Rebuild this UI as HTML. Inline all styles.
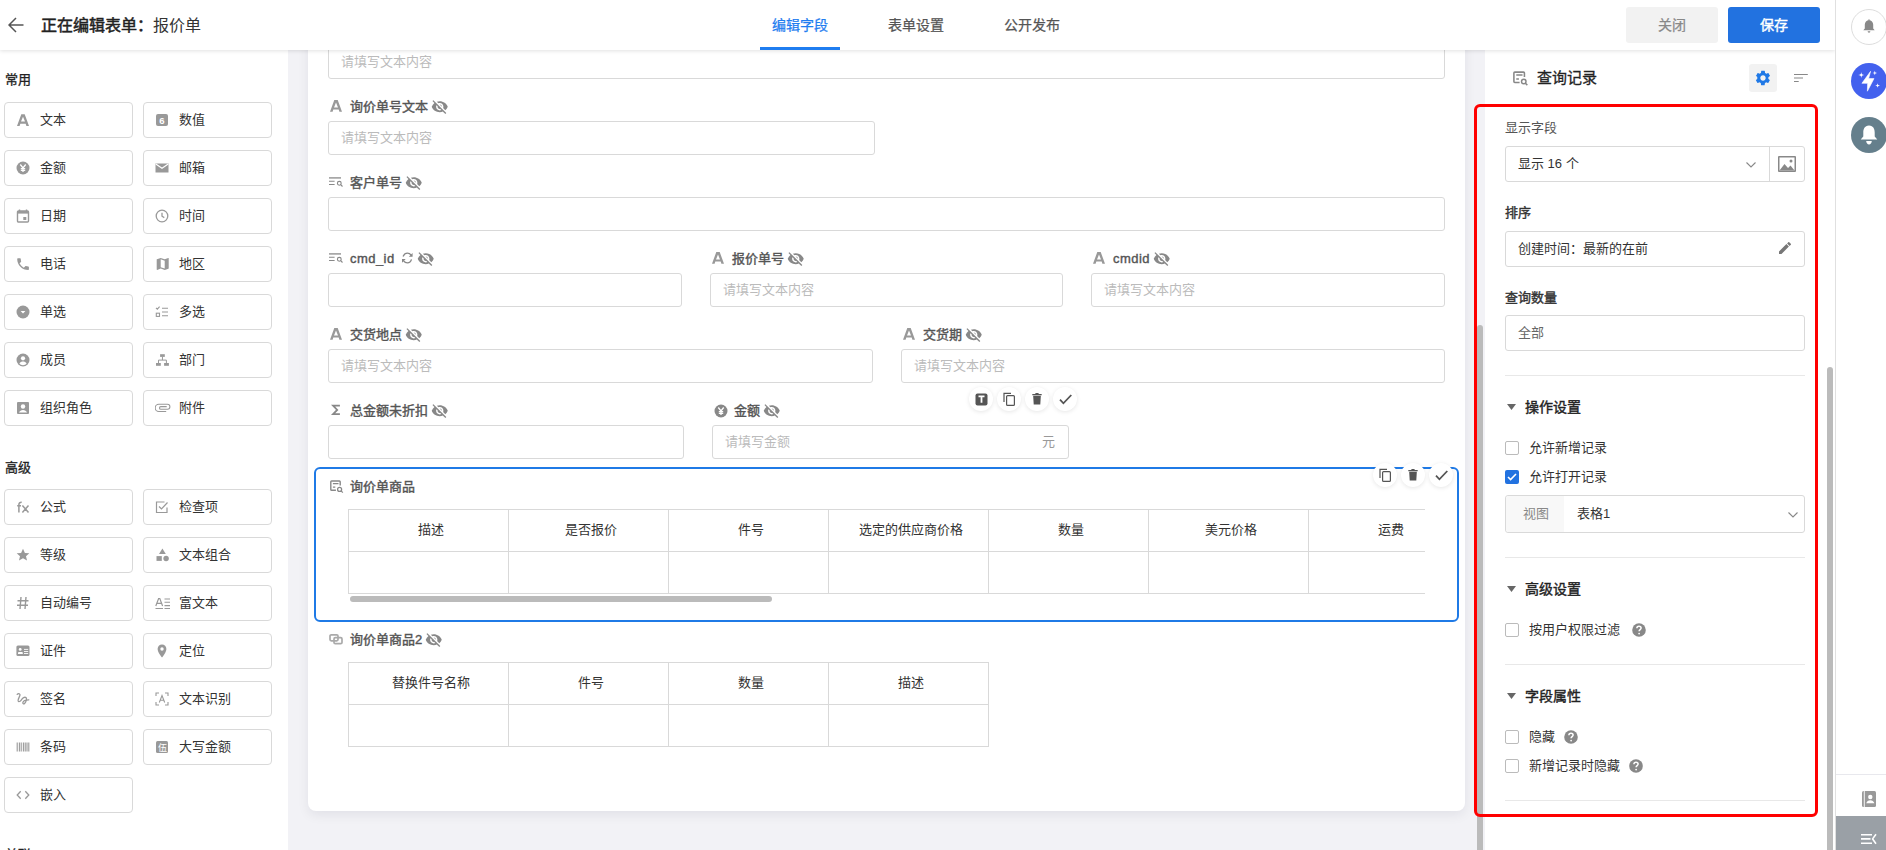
<!DOCTYPE html>
<html lang="zh-CN"><head><meta charset="utf-8">
<style>
*{box-sizing:border-box;margin:0;padding:0}
html,body{width:1886px;height:850px;overflow:hidden;background:#f2f2f6;font-family:"Liberation Sans",sans-serif;color:#333}
.abs{position:absolute}
svg{display:block}
#hdr{position:absolute;left:0;top:0;width:1835px;height:50px;background:#fff;box-shadow:0 1px 4px rgba(0,0,0,.12);z-index:10}
#rstrip{position:absolute;left:1835px;top:0;width:51px;height:850px;background:#fff;border-left:1px solid #e0e0e0;z-index:11}
#side{position:absolute;left:0;top:50px;width:288px;height:800px;background:#fff;overflow:hidden}
.sh{position:absolute;left:5px;font-size:13px;-webkit-text-stroke-width:.3px;color:#222;line-height:14px}
.sb{position:absolute;width:129px;height:36px;border:1px solid #d9d9d9;border-radius:4px;background:#fff}
.sb .ic{position:absolute;left:11px;top:10px;width:14px;height:14px}
.sb .tx{position:absolute;left:35px;top:9px;font-size:13px;line-height:16px;color:#333}
#panel{position:absolute;left:308px;top:0;width:1157px;height:811px;background:#fff;border-radius:0 0 8px 8px;box-shadow:0 4px 12px rgba(0,0,40,.07)}
.lab{position:absolute;font-size:13px;-webkit-text-stroke-width:.4px;color:#555;line-height:16px;white-space:nowrap}
.ie{display:inline-block;height:16px;vertical-align:top;position:relative}
.inp{position:absolute;height:34px;border:1px solid #d9d9d9;border-radius:3px;background:#fff}
.ph{position:absolute;left:12px;top:8px;font-size:13px;line-height:16px;color:#bbb;white-space:nowrap}
#rpc{white-space:nowrap}
#rp{position:absolute;left:1485px;top:50px;width:350px;height:800px;background:#fff}
.cell{padding-left:5px;border-right:1px solid #d9d9d9;border-bottom:1px solid #d9d9d9;font-size:13px;line-height:40px;text-align:center;color:#333}
.tbb{position:absolute;width:24px;height:24px;border-radius:12px;background:#fff;box-shadow:0 1px 4px rgba(0,0,0,.1);display:flex;align-items:center;justify-content:center;z-index:3}
.tab{top:16px;font-size:14px;line-height:18px;color:#555;white-space:nowrap;-webkit-text-stroke-width:.25px}
.btn{top:7px;width:92px;height:36px;border-radius:3px;font-size:14px;line-height:36px;text-align:center}
.circ{width:36px;height:36px;border-radius:50%}
.rl{position:absolute;left:1505px;font-size:13px;line-height:16px;color:#555;white-space:nowrap}
.rin{position:absolute;left:1505px;width:300px;border:1px solid #d9d9d9;border-radius:3px;background:#fff}
.rt{position:absolute;left:12px;top:9px;font-size:13px;line-height:16px;color:#333;white-space:nowrap}
</style></head><body>
<div id="panel"></div>
<div id="pc" class="abs" style="left:0;top:0;width:1886px;height:850px">
<div class="inp" style="left:328px;top:45px;width:1117px"><div class="ph" style="top:8px">请填写文本内容</div></div>
<div class="abs" style="left:330px;top:100px"><svg width="12" height="12" viewBox="0 0 12 12"><path d="M0 11.800L4.300 0H7.700L12 11.800H9.400L8.700 9.600H3.300L2.600 11.800ZM4 7.400H8L6 2.600Z" fill="#999"/></svg></div><div class="lab" style="left:350px;top:99px">询价单号文本<span class="ie" style="width:17.5px;margin-left:3px"><span style="position:absolute;left:0;top:-1px"><svg width="17.500" height="17.500" viewBox="0 0 24 24"><path fill="#888" d="M12 7c2.760 0 5 2.240 5 5 0 .650-.130 1.260-.360 1.830l2.920 2.920c1.510-1.260 2.700-2.890 3.430-4.750-1.730-4.390-6-7.500-11-7.500-1.400 0-2.740.250-3.980.700l2.160 2.160C10.740 7.130 11.350 7 12 7zM2 4.270l2.280 2.280.460.460C3.080 8.300 1.780 10.020 1 12c1.730 4.390 6 7.500 11 7.500 1.550 0 3.030-.300 4.380-.840l.420.420L19.730 22 21 20.730 3.270 3 2 4.270zM7.530 9.800l1.550 1.550c-.050.210-.080.430-.080.650 0 1.660 1.340 3 3 3 .220 0 .440-.030.650-.080l1.550 1.550c-.670.330-1.410.530-2.200.530-2.760 0-5-2.240-5-5 0-.790.200-1.530.530-2.200zm4.310-.780l3.150 3.150.020-.160c0-1.660-1.340-3-3-3l-.170.010z"/></svg></span></span></div>
<div class="inp" style="left:328px;top:121px;width:547px"><div class="ph">请填写文本内容</div></div>
<div class="abs" style="left:329px;top:176px"><svg width="14" height="12" viewBox="0 0 14 12"><path d="M0 1.900H12" stroke="#999" stroke-width="1.500"/><path d="M0 5.300H5.600M0 8.500H5.600" stroke="#888" stroke-width="1.100"/><circle cx="10.300" cy="7.300" r="1.900" fill="none" stroke="#888" stroke-width="1.100"/><path d="M11.700 8.700L13.500 10.500" stroke="#888" stroke-width="1.100"/></svg></div><div class="lab" style="left:350px;top:175px">客户单号<span class="ie" style="width:17.5px;margin-left:3px"><span style="position:absolute;left:0;top:-1px"><svg width="17.500" height="17.500" viewBox="0 0 24 24"><path fill="#888" d="M12 7c2.760 0 5 2.240 5 5 0 .650-.130 1.260-.360 1.830l2.920 2.920c1.510-1.260 2.700-2.890 3.430-4.750-1.730-4.390-6-7.500-11-7.500-1.400 0-2.740.250-3.980.700l2.160 2.160C10.740 7.130 11.350 7 12 7zM2 4.270l2.280 2.280.460.460C3.080 8.300 1.780 10.020 1 12c1.730 4.390 6 7.500 11 7.500 1.550 0 3.030-.300 4.380-.840l.420.420L19.730 22 21 20.730 3.270 3 2 4.270zM7.530 9.800l1.550 1.550c-.050.210-.080.430-.080.650 0 1.660 1.340 3 3 3 .220 0 .440-.030.650-.080l1.550 1.550c-.670.330-1.410.530-2.200.530-2.760 0-5-2.240-5-5 0-.790.200-1.530.530-2.200zm4.310-.780l3.150 3.150.020-.160c0-1.660-1.340-3-3-3l-.170.010z"/></svg></span></span></div>
<div class="inp" style="left:328px;top:197px;width:1117px"></div>
<div class="abs" style="left:329px;top:252px"><svg width="14" height="12" viewBox="0 0 14 12"><path d="M0 1.900H12" stroke="#999" stroke-width="1.500"/><path d="M0 5.300H5.600M0 8.500H5.600" stroke="#888" stroke-width="1.100"/><circle cx="10.300" cy="7.300" r="1.900" fill="none" stroke="#888" stroke-width="1.100"/><path d="M11.700 8.700L13.500 10.500" stroke="#888" stroke-width="1.100"/></svg></div><div class="lab" style="left:350px;top:251px"><span style="letter-spacing:.45px">cmd_id</span><span class="ie" style="width:13px;margin-left:6px"><span style="position:absolute;left:0;top:1px"><svg width="13" height="12" viewBox="0 0 13 12"><path d="M2.100 4.600C3 2.300 4.900 1.200 6.400 1.200C8 1.200 9.300 2 10.100 3.200M10.500 7.400C9.900 9.500 8.200 10.900 6.400 10.900C4.800 10.900 3.500 10.100 2.600 8.800" stroke="#888" stroke-width="1.300" fill="none"/><path d="M11.600 .9V4.700H7.800ZM1 10.800V7.100H4.700Z" fill="#888"/></svg></span></span><span class="ie" style="width:17.5px;margin-left:3px"><span style="position:absolute;left:0;top:-1px"><svg width="17.500" height="17.500" viewBox="0 0 24 24"><path fill="#888" d="M12 7c2.760 0 5 2.240 5 5 0 .650-.130 1.260-.360 1.830l2.920 2.920c1.510-1.260 2.700-2.890 3.430-4.750-1.730-4.390-6-7.500-11-7.500-1.400 0-2.740.250-3.980.700l2.160 2.160C10.740 7.130 11.350 7 12 7zM2 4.270l2.280 2.280.460.460C3.080 8.300 1.780 10.020 1 12c1.730 4.390 6 7.500 11 7.500 1.550 0 3.030-.300 4.380-.840l.420.420L19.730 22 21 20.730 3.270 3 2 4.270zM7.530 9.800l1.550 1.550c-.050.210-.080.430-.080.650 0 1.660 1.340 3 3 3 .220 0 .440-.030.650-.080l1.550 1.550c-.670.330-1.410.530-2.200.530-2.760 0-5-2.240-5-5 0-.790.200-1.530.530-2.200zm4.310-.780l3.150 3.150.020-.160c0-1.660-1.340-3-3-3l-.170.010z"/></svg></span></span></div>
<div class="inp" style="left:328px;top:273px;width:354px"></div>
<div class="abs" style="left:712px;top:252px"><svg width="12" height="12" viewBox="0 0 12 12"><path d="M0 11.800L4.300 0H7.700L12 11.800H9.400L8.700 9.600H3.300L2.600 11.800ZM4 7.400H8L6 2.600Z" fill="#999"/></svg></div><div class="lab" style="left:732px;top:251px">报价单号<span class="ie" style="width:17.5px;margin-left:3px"><span style="position:absolute;left:0;top:-1px"><svg width="17.500" height="17.500" viewBox="0 0 24 24"><path fill="#888" d="M12 7c2.760 0 5 2.240 5 5 0 .650-.130 1.260-.360 1.830l2.920 2.920c1.510-1.260 2.700-2.890 3.430-4.750-1.730-4.390-6-7.500-11-7.500-1.400 0-2.740.250-3.980.700l2.160 2.160C10.740 7.130 11.350 7 12 7zM2 4.270l2.280 2.280.460.460C3.080 8.300 1.780 10.020 1 12c1.730 4.390 6 7.500 11 7.500 1.550 0 3.030-.300 4.380-.840l.420.420L19.730 22 21 20.730 3.270 3 2 4.270zM7.530 9.800l1.550 1.550c-.050.210-.080.430-.080.650 0 1.660 1.340 3 3 3 .220 0 .440-.030.650-.080l1.550 1.550c-.670.330-1.410.530-2.200.530-2.760 0-5-2.240-5-5 0-.790.200-1.530.530-2.200zm4.310-.780l3.150 3.150.020-.160c0-1.660-1.340-3-3-3l-.170.010z"/></svg></span></span></div>
<div class="inp" style="left:710px;top:273px;width:353px"><div class="ph">请填写文本内容</div></div>
<div class="abs" style="left:1093px;top:252px"><svg width="12" height="12" viewBox="0 0 12 12"><path d="M0 11.800L4.300 0H7.700L12 11.800H9.400L8.700 9.600H3.300L2.600 11.800ZM4 7.400H8L6 2.600Z" fill="#999"/></svg></div><div class="lab" style="left:1113px;top:251px"><span style="letter-spacing:.45px">cmdid</span><span class="ie" style="width:17.5px;margin-left:3px"><span style="position:absolute;left:0;top:-1px"><svg width="17.500" height="17.500" viewBox="0 0 24 24"><path fill="#888" d="M12 7c2.760 0 5 2.240 5 5 0 .650-.130 1.260-.360 1.830l2.920 2.920c1.510-1.260 2.700-2.890 3.430-4.750-1.730-4.390-6-7.500-11-7.500-1.400 0-2.740.250-3.980.700l2.160 2.160C10.740 7.130 11.350 7 12 7zM2 4.270l2.280 2.280.460.460C3.080 8.300 1.780 10.020 1 12c1.730 4.390 6 7.500 11 7.500 1.550 0 3.030-.300 4.380-.840l.420.420L19.730 22 21 20.730 3.270 3 2 4.270zM7.530 9.800l1.550 1.550c-.050.210-.080.430-.080.650 0 1.660 1.340 3 3 3 .220 0 .440-.030.650-.080l1.550 1.550c-.670.330-1.410.530-2.200.530-2.760 0-5-2.240-5-5 0-.790.200-1.530.530-2.200zm4.310-.780l3.150 3.150.020-.160c0-1.660-1.340-3-3-3l-.170.010z"/></svg></span></span></div>
<div class="inp" style="left:1091px;top:273px;width:354px"><div class="ph">请填写文本内容</div></div>
<div class="abs" style="left:330px;top:328px"><svg width="12" height="12" viewBox="0 0 12 12"><path d="M0 11.800L4.300 0H7.700L12 11.800H9.400L8.700 9.600H3.300L2.600 11.800ZM4 7.400H8L6 2.600Z" fill="#999"/></svg></div><div class="lab" style="left:350px;top:327px">交货地点<span class="ie" style="width:17.5px;margin-left:3px"><span style="position:absolute;left:0;top:-1px"><svg width="17.500" height="17.500" viewBox="0 0 24 24"><path fill="#888" d="M12 7c2.760 0 5 2.240 5 5 0 .650-.130 1.260-.360 1.830l2.920 2.920c1.510-1.260 2.700-2.890 3.430-4.750-1.730-4.390-6-7.500-11-7.500-1.400 0-2.740.250-3.980.700l2.160 2.160C10.740 7.130 11.350 7 12 7zM2 4.270l2.280 2.280.460.460C3.080 8.300 1.780 10.020 1 12c1.730 4.390 6 7.500 11 7.500 1.550 0 3.030-.300 4.380-.840l.420.420L19.730 22 21 20.730 3.270 3 2 4.270zM7.530 9.800l1.550 1.550c-.050.210-.080.430-.080.650 0 1.660 1.340 3 3 3 .220 0 .440-.030.650-.080l1.550 1.550c-.670.330-1.410.530-2.200.530-2.760 0-5-2.240-5-5 0-.790.200-1.530.530-2.200zm4.310-.780l3.150 3.150.020-.160c0-1.660-1.340-3-3-3l-.170.010z"/></svg></span></span></div>
<div class="inp" style="left:328px;top:349px;width:545px"><div class="ph">请填写文本内容</div></div>
<div class="abs" style="left:903px;top:328px"><svg width="12" height="12" viewBox="0 0 12 12"><path d="M0 11.800L4.300 0H7.700L12 11.800H9.400L8.700 9.600H3.300L2.600 11.800ZM4 7.400H8L6 2.600Z" fill="#999"/></svg></div><div class="lab" style="left:923px;top:327px">交货期<span class="ie" style="width:17.5px;margin-left:3px"><span style="position:absolute;left:0;top:-1px"><svg width="17.500" height="17.500" viewBox="0 0 24 24"><path fill="#888" d="M12 7c2.760 0 5 2.240 5 5 0 .650-.130 1.260-.360 1.830l2.920 2.920c1.510-1.260 2.700-2.890 3.430-4.750-1.730-4.390-6-7.500-11-7.500-1.400 0-2.740.250-3.980.700l2.160 2.160C10.740 7.130 11.350 7 12 7zM2 4.270l2.280 2.280.460.460C3.080 8.300 1.780 10.020 1 12c1.730 4.390 6 7.500 11 7.500 1.550 0 3.030-.300 4.380-.840l.420.420L19.730 22 21 20.730 3.270 3 2 4.270zM7.530 9.800l1.550 1.550c-.050.210-.080.430-.080.650 0 1.660 1.340 3 3 3 .220 0 .440-.030.650-.080l1.550 1.550c-.670.330-1.410.530-2.200.530-2.760 0-5-2.240-5-5 0-.790.200-1.530.530-2.200zm4.310-.780l3.150 3.150.020-.160c0-1.660-1.340-3-3-3l-.170.010z"/></svg></span></span></div>
<div class="inp" style="left:901px;top:349px;width:544px"><div class="ph">请填写文本内容</div></div>
<div class="abs" style="left:330px;top:404px"><svg width="12" height="12" viewBox="0 0 12 12"><path d="M9.900 1.600H3.100L7.200 5.900L3.100 10.100H9.900" stroke="#888" stroke-width="1.800" fill="none"/></svg></div><div class="lab" style="left:350px;top:403px">总金额未折扣<span class="ie" style="width:17.5px;margin-left:3px"><span style="position:absolute;left:0;top:-1px"><svg width="17.500" height="17.500" viewBox="0 0 24 24"><path fill="#888" d="M12 7c2.760 0 5 2.240 5 5 0 .650-.130 1.260-.360 1.830l2.920 2.920c1.510-1.260 2.700-2.890 3.430-4.750-1.730-4.390-6-7.500-11-7.500-1.400 0-2.740.250-3.980.700l2.160 2.160C10.740 7.130 11.350 7 12 7zM2 4.270l2.280 2.280.460.460C3.080 8.300 1.780 10.020 1 12c1.730 4.390 6 7.500 11 7.500 1.550 0 3.030-.300 4.380-.840l.420.420L19.730 22 21 20.730 3.270 3 2 4.270zM7.530 9.800l1.550 1.550c-.050.210-.080.430-.080.650 0 1.660 1.340 3 3 3 .220 0 .440-.030.650-.080l1.550 1.550c-.670.330-1.410.530-2.200.530-2.760 0-5-2.240-5-5 0-.790.200-1.530.530-2.200zm4.310-.780l3.150 3.150.020-.160c0-1.660-1.340-3-3-3l-.170.010z"/></svg></span></span></div>
<div class="inp" style="left:328px;top:425px;width:356px"></div>
<div class="abs" style="left:714px;top:404px"><svg width="14" height="14" viewBox="0 0 14 14"><circle cx="7" cy="7" r="6.500" fill="#888"/><path d="M4.300 3.500L7 7l2.700-3.500M7 7v4M4.800 7.600h4.400M4.800 9.300h4.400" stroke="#fff" stroke-width="1.300" fill="none"/></svg></div><div class="lab" style="left:734px;top:403px">金额<span class="ie" style="width:17.5px;margin-left:3px"><span style="position:absolute;left:0;top:-1px"><svg width="17.500" height="17.500" viewBox="0 0 24 24"><path fill="#888" d="M12 7c2.760 0 5 2.240 5 5 0 .650-.130 1.260-.360 1.830l2.920 2.920c1.510-1.260 2.700-2.890 3.430-4.750-1.730-4.390-6-7.500-11-7.500-1.400 0-2.740.250-3.980.700l2.160 2.160C10.740 7.130 11.350 7 12 7zM2 4.270l2.280 2.280.460.460C3.080 8.300 1.780 10.020 1 12c1.730 4.390 6 7.500 11 7.500 1.550 0 3.030-.300 4.380-.840l.420.420L19.730 22 21 20.730 3.270 3 2 4.270zM7.530 9.800l1.550 1.550c-.050.210-.080.430-.080.650 0 1.660 1.340 3 3 3 .220 0 .440-.030.650-.080l1.550 1.550c-.670.330-1.410.530-2.200.530-2.760 0-5-2.240-5-5 0-.790.200-1.530.530-2.200zm4.310-.780l3.150 3.150.020-.160c0-1.660-1.340-3-3-3l-.170.010z"/></svg></span></span></div>
<div class="inp" style="left:712px;top:425px;width:357px"><div class="ph">请填写金额</div><div class="ph" style="left:auto;right:13px;color:#999">元</div></div>
<div class="abs" style="left:314px;top:467px;width:1145px;height:155px;border:2px solid #1f7ae6;border-radius:6px"></div>
<div class="abs" style="left:330px;top:480px"><svg width="14" height="14" viewBox="0 0 14 14"><path d="M10.200 5.400V1.800Q10.200 1 9.400 1H1.600Q.800 1 .800 1.800V9.400Q.800 10.200 1.600 10.200H5.900" stroke="#888" stroke-width="1.400" fill="none"/><path d="M2.900 3.600H8.500M2.900 7.100H5.300" stroke="#888" stroke-width="1.300"/><circle cx="9.600" cy="9.400" r="2" fill="none" stroke="#888" stroke-width="1.300"/><path d="M11.100 10.900L12.800 12.600" stroke="#888" stroke-width="1.300"/></svg></div>
<div class="lab" style="left:350px;top:479px">询价单商品</div>
<div class="abs" style="left:348px;top:509px;width:1077px;height:96px;overflow:hidden"><div class="abs" style="left:0;top:0;width:1120px;height:85px;border-top:1px solid #d9d9d9;border-left:1px solid #d9d9d9"><div class="abs cell" style="left:0px;top:0;width:160px;height:42px">描述</div><div class="abs cell" style="left:0px;top:42px;width:160px;height:42px"></div><div class="abs cell" style="left:160px;top:0;width:160px;height:42px">是否报价</div><div class="abs cell" style="left:160px;top:42px;width:160px;height:42px"></div><div class="abs cell" style="left:320px;top:0;width:160px;height:42px">件号</div><div class="abs cell" style="left:320px;top:42px;width:160px;height:42px"></div><div class="abs cell" style="left:480px;top:0;width:160px;height:42px">选定的供应商价格</div><div class="abs cell" style="left:480px;top:42px;width:160px;height:42px"></div><div class="abs cell" style="left:640px;top:0;width:160px;height:42px">数量</div><div class="abs cell" style="left:640px;top:42px;width:160px;height:42px"></div><div class="abs cell" style="left:800px;top:0;width:160px;height:42px">美元价格</div><div class="abs cell" style="left:800px;top:42px;width:160px;height:42px"></div><div class="abs cell" style="left:960px;top:0;width:160px;height:42px">运费</div><div class="abs cell" style="left:960px;top:42px;width:160px;height:42px"></div></div><div class="abs" style="left:2px;top:87px;width:422px;height:6px;border-radius:3px;background:#bbb"></div></div>
<div class="abs" style="left:329px;top:633px"><svg width="14" height="12" viewBox="0 0 14 12"><rect x="1" y="1.800" width="8" height="6" rx="1.300" fill="none" stroke="#aaa" stroke-width="1.700"/><rect x="5" y="4.700" width="8" height="6" rx="1.300" fill="none" stroke="#aaa" stroke-width="1.700"/></svg></div>
<div class="lab" style="left:350px;top:632px">询价单商品2<span class="ie" style="width:17.5px;margin-left:3px"><span style="position:absolute;left:0;top:-1px"><svg width="17.500" height="17.500" viewBox="0 0 24 24"><path fill="#888" d="M12 7c2.760 0 5 2.240 5 5 0 .650-.130 1.260-.360 1.830l2.920 2.920c1.510-1.260 2.700-2.890 3.430-4.750-1.730-4.390-6-7.500-11-7.500-1.400 0-2.740.250-3.980.700l2.160 2.160C10.740 7.130 11.350 7 12 7zM2 4.270l2.280 2.280.460.460C3.080 8.300 1.780 10.020 1 12c1.730 4.390 6 7.500 11 7.500 1.550 0 3.030-.300 4.380-.840l.420.420L19.730 22 21 20.730 3.270 3 2 4.270zM7.530 9.800l1.550 1.550c-.050.210-.080.430-.080.650 0 1.660 1.340 3 3 3 .220 0 .440-.030.650-.080l1.550 1.550c-.670.330-1.410.530-2.200.530-2.760 0-5-2.240-5-5 0-.790.200-1.530.530-2.200zm4.310-.780l3.150 3.150.020-.160c0-1.660-1.340-3-3-3l-.170.010z"/></svg></span></span></div>
<div class="abs" style="left:348px;top:662px;width:641px;height:85px;border-top:1px solid #d9d9d9;border-left:1px solid #d9d9d9"><div class="abs cell" style="left:0px;top:0;width:160px;height:42px">替换件号名称</div><div class="abs cell" style="left:0px;top:42px;width:160px;height:42px"></div><div class="abs cell" style="left:160px;top:0;width:160px;height:42px">件号</div><div class="abs cell" style="left:160px;top:42px;width:160px;height:42px"></div><div class="abs cell" style="left:320px;top:0;width:160px;height:42px">数量</div><div class="abs cell" style="left:320px;top:42px;width:160px;height:42px"></div><div class="abs cell" style="left:480px;top:0;width:160px;height:42px">描述</div><div class="abs cell" style="left:480px;top:42px;width:160px;height:42px"></div></div>
<div class="tbb" style="left:969px;top:387px"><svg width="13" height="13" viewBox="0 0 13 13"><rect x=".5" y=".5" width="12" height="12" rx="2" fill="#555"/><path d="M3.500 3.300h6M6.500 3.300v6.500" stroke="#fff" stroke-width="1.800"/></svg></div>
<div class="tbb" style="left:997px;top:387px"><svg width="13" height="14" viewBox="0 0 13 14"><path d="M1 10V1.300h7" stroke="#555" stroke-width="1.200" fill="none"/><rect x="3.600" y="3.600" width="7.800" height="9.800" rx="1" fill="none" stroke="#555" stroke-width="1.200"/></svg></div>
<div class="tbb" style="left:1025px;top:387px"><svg width="10" height="12" viewBox="0 0 10 12"><path d="M.3 1.600h9.400M3.400.6h3.200" stroke="#555" stroke-width="1.300"/><path d="M1.200 2.800h7.600l-.5 8.700H1.700z" fill="#555"/></svg></div>
<div class="tbb" style="left:1053px;top:387px"><svg width="13" height="11" viewBox="0 0 13 11"><path d="M1 5.700l3.400 3.600L12.300 1" stroke="#555" stroke-width="1.800" fill="none"/></svg></div>
<div class="tbb" style="left:1373px;top:463px"><svg width="13" height="14" viewBox="0 0 13 14"><path d="M1 10V1.300h7" stroke="#555" stroke-width="1.200" fill="none"/><rect x="3.600" y="3.600" width="7.800" height="9.800" rx="1" fill="none" stroke="#555" stroke-width="1.200"/></svg></div>
<div class="tbb" style="left:1401px;top:463px"><svg width="10" height="12" viewBox="0 0 10 12"><path d="M.3 1.600h9.400M3.400.6h3.200" stroke="#555" stroke-width="1.300"/><path d="M1.200 2.800h7.600l-.5 8.700H1.700z" fill="#555"/></svg></div>
<div class="tbb" style="left:1429px;top:463px"><svg width="13" height="11" viewBox="0 0 13 11"><path d="M1 5.700l3.400 3.600L12.300 1" stroke="#555" stroke-width="1.800" fill="none"/></svg></div>
</div>
<div id="side">
<div class="sh" style="top:23px">常用</div>
<div class="sb" style="left:4px;top:52px"><div class="ic"><svg width="14" height="14" viewBox="0 0 14 14"><path d="M1 13L5.300 1.200H8.700L13 13H10.400L9.700 10.800H4.300L3.600 13ZM5 8.600H9L7 3.800Z" fill="#999"/></svg></div><div class="tx">文本</div></div>
<div class="sb" style="left:143px;top:52px"><div class="ic"><svg width="14" height="14" viewBox="0 0 14 14"><rect x="1" y="1" width="12" height="12" rx="2" fill="#999"/><text x="7" y="11" font-size="9.5" font-weight="bold" text-anchor="middle" fill="#fff" font-family="Liberation Sans">6</text></svg></div><div class="tx">数值</div></div>
<div class="sb" style="left:4px;top:100px"><div class="ic"><svg width="14" height="14" viewBox="0 0 14 14"><circle cx="7" cy="7" r="6.5" fill="#999"/><path d="M4.3 3.5L7 7l2.7-3.5M7 7v4M4.8 7.6h4.4M4.8 9.3h4.4" stroke="#fff" stroke-width="1.3" fill="none"/></svg></div><div class="tx">金额</div></div>
<div class="sb" style="left:143px;top:100px"><div class="ic"><svg width="14" height="14" viewBox="0 0 14 14"><path d="M0.5 2.5h13v9h-13z" fill="#999"/><path d="M0.8 3l6.2 4.2L13.2 3" stroke="#fff" stroke-width="1.2" fill="none"/></svg></div><div class="tx">邮箱</div></div>
<div class="sb" style="left:4px;top:148px"><div class="ic"><svg width="14" height="14" viewBox="0 0 14 14"><path d="M3.5 0.5v2M10.5 0.5v2" stroke="#999" stroke-width="1.4"/><rect x="1.5" y="2" width="11" height="11" rx="1" fill="none" stroke="#999" stroke-width="1.4"/><rect x="1.5" y="2" width="11" height="2.6" fill="#999"/><rect x="7.3" y="8" width="3" height="3" fill="#999"/></svg></div><div class="tx">日期</div></div>
<div class="sb" style="left:143px;top:148px"><div class="ic"><svg width="14" height="14" viewBox="0 0 14 14"><circle cx="7" cy="7" r="5.8" fill="none" stroke="#999" stroke-width="1.3"/><path d="M7 3.8V7.2l2.3 1.4" stroke="#999" stroke-width="1.3" fill="none"/></svg></div><div class="tx">时间</div></div>
<div class="sb" style="left:4px;top:196px"><div class="ic"><svg width="14" height="14" viewBox="0 0 14 14"><g transform="translate(-0.750 -0.650) scale(0.650)"><path d="M6.620 10.790c1.440 2.830 3.760 5.140 6.590 6.590l2.200-2.200c.270-.270.670-.360 1.020-.240 1.120.370 2.330.570 3.570.570.550 0 1 .450 1 1V20c0 .550-.450 1-1 1-9.390 0-17-7.610-17-17 0-.550.450-1 1-1h3.500c.550 0 1 .450 1 1 0 1.250.200 2.450.570 3.570.110.350.030.740-.250 1.020l-2.200 2.200z" fill="#999"/></g></svg></div><div class="tx">电话</div></div>
<div class="sb" style="left:143px;top:196px"><div class="ic"><svg width="14" height="14" viewBox="0 0 14 14"><g transform="translate(-0.300 -1.100) scale(0.667)"><path d="M20.500 3l-.160.030L15 5.100 9 3 3.360 4.900c-.210.070-.360.250-.360.480V20.500c0 .280.220.500.500.500l.160-.030L9 18.900l6 2.100 5.640-1.900c.210-.070.360-.250.360-.480V3.500c0-.280-.220-.500-.500-.500zM15 19l-6-2.110V5l6 2.110V19z" fill="#999"/></g></svg></div><div class="tx">地区</div></div>
<div class="sb" style="left:4px;top:244px"><div class="ic"><svg width="14" height="14" viewBox="0 0 14 14"><circle cx="7" cy="7" r="6.5" fill="#999"/><path d="M4.6 6l2.4 2.4L9.4 6z" fill="#fff"/></svg></div><div class="tx">单选</div></div>
<div class="sb" style="left:143px;top:244px"><div class="ic"><svg width="14" height="14" viewBox="0 0 14 14"><path d="M1 2.8l1.3 1.3L4.6 1.6" stroke="#999" stroke-width="1.1" fill="none"/><rect x="1.3" y="8.2" width="3.2" height="3.2" fill="none" stroke="#999" stroke-width="1.1"/><path d="M7 3.2h6M7 7h6M7 10.8h6" stroke="#999" stroke-width="1.1"/></svg></div><div class="tx">多选</div></div>
<div class="sb" style="left:4px;top:292px"><div class="ic"><svg width="14" height="14" viewBox="0 0 14 14"><circle cx="7" cy="7" r="6.5" fill="#999"/><circle cx="7" cy="5.3" r="2.1" fill="#fff"/><path d="M3.4 10.6c.9-1.4 2.200-2 3.600-2s2.700.6 3.600 2c-.9 1-2.200 1.600-3.600 1.600s-2.700-.6-3.600-1.600z" fill="#fff"/></svg></div><div class="tx">成员</div></div>
<div class="sb" style="left:143px;top:292px"><div class="ic"><svg width="14" height="14" viewBox="0 0 14 14"><rect x="5.100" y="1.200" width="4.700" height="2.700" fill="#999"/><path d="M7.450 3.800V7.100M3.500 10.200V7.100H11.400V10.200" stroke="#999" stroke-width="1" fill="none"/><rect x="1" y="10" width="4.800" height="2.800" fill="#999"/><rect x="9.100" y="10" width="4.800" height="2.800" fill="#999"/></svg></div><div class="tx">部门</div></div>
<div class="sb" style="left:4px;top:340px"><div class="ic"><svg width="14" height="14" viewBox="0 0 14 14"><rect x="1" y="1" width="12" height="12" rx="1" fill="#999"/><circle cx="7" cy="5.5" r="2.2" fill="#fff"/><path d="M3 11.5c.6-1.8 2.200-2.600 4-2.600s3.400.8 4 2.600z" fill="#fff"/></svg></div><div class="tx">组织角色</div></div>
<div class="sb" style="left:143px;top:340px"><div class="ic"><svg width="16" height="14" viewBox="0 0 16 14"><path d="M11.700 5.600H5.800A1.300 1.300 0 0 0 5.800 8.200H12.450A2.450 2.450 0 0 0 12.450 3.300H3.800A3.600 3.600 0 0 0 3.800 10.500H11.200" stroke="#999" stroke-width="1.100" fill="none"/></svg></div><div class="tx">附件</div></div>
<div class="sh" style="top:411px">高级</div>
<div class="sb" style="left:4px;top:439px"><div class="ic"><svg width="14" height="14" viewBox="0 0 14 14"><path d="M2.900 12.500V4.700C2.900 3 3.800 2.200 5.700 2.300M1.200 5.700H5M6.400 5.400L12.500 12.500M12.500 5.400L6.400 12.500" stroke="#999" stroke-width="1.500" fill="none"/></svg></div><div class="tx">公式</div></div>
<div class="sb" style="left:143px;top:439px"><div class="ic"><svg width="14" height="14" viewBox="0 0 14 14"><path d="M12 7.5V12.5H1.5V2h8" stroke="#999" stroke-width="1.2" fill="none"/><path d="M4 6.5l2.5 2.5L12.5 2.5" stroke="#999" stroke-width="1.2" fill="none"/></svg></div><div class="tx">检查项</div></div>
<div class="sb" style="left:4px;top:487px"><div class="ic"><svg width="14" height="14" viewBox="0 0 14 14"><path d="M7 .8l1.900 4.100 4.400.4-3.300 2.900 1 4.400L7 10.300 3 12.600l1-4.400L.7 5.300l4.400-.4z" fill="#999"/></svg></div><div class="tx">等级</div></div>
<div class="sb" style="left:143px;top:487px"><div class="ic"><svg width="14" height="14" viewBox="0 0 14 14"><path d="M7.400 .6L10.800 6H4Z" fill="#999"/><rect x="1.500" y="8.100" width="5.300" height="4.800" fill="#999"/><circle cx="11.100" cy="10.500" r="2.700" fill="#999"/></svg></div><div class="tx">文本组合</div></div>
<div class="sb" style="left:4px;top:535px"><div class="ic"><svg width="14" height="14" viewBox="0 0 14 14"><path d="M5 1l-1 12M10 1L9 13M1.5 4.8h11M1 9.2h11" stroke="#999" stroke-width="1.4" fill="none"/></svg></div><div class="tx">自动编号</div></div>
<div class="sb" style="left:143px;top:535px"><div class="ic"><svg width="16" height="14" viewBox="0 0 16 14"><path d="M.8 10L3.600 2.500h1.200L7.600 10M1.900 7.300h4.600M.5 12.500h7.500" stroke="#999" stroke-width="1.2" fill="none"/><path d="M9.500 3h5.500M9.500 6.300h5.500M9.500 9.600h5.500M9.500 12.500h5.500" stroke="#999" stroke-width="1.1"/></svg></div><div class="tx">富文本</div></div>
<div class="sb" style="left:4px;top:583px"><div class="ic"><svg width="14" height="14" viewBox="0 0 14 14"><rect x=".4" y="1.600" width="13.100" height="10.400" rx="1.500" fill="#999"/><circle cx="4.200" cy="5.400" r="1.400" fill="#fff"/><path d="M2 9.900V9C2 8.400 2.600 8 3.200 8H5.600C6.200 8 6.800 8.400 6.800 9V9.900Z" fill="#fff"/><path d="M8 5.400H12.200M8 7.500H12.200M8 9.500H12.200" stroke="#fff" stroke-width=".9"/></svg></div><div class="tx">证件</div></div>
<div class="sb" style="left:143px;top:583px"><div class="ic"><svg width="14" height="14" viewBox="0 0 14 14"><path d="M7 .5C4.500.5 2.600 2.400 2.600 4.900 2.600 8.200 7 13.500 7 13.500s4.400-5.300 4.400-8.600C11.400 2.400 9.500.5 7 .5z" fill="#999"/><circle cx="7" cy="5" r="1.700" fill="#fff"/></svg></div><div class="tx">定位</div></div>
<div class="sb" style="left:4px;top:631px"><div class="ic"><svg width="14" height="14" viewBox="0 0 14 14"><path d="M1.200 2.400C2 1.300 3.600 1.200 4 2.600C4.300 4 1.600 7.200 2.100 8.800C2.600 10.200 4.200 9.600 5.400 7.800C6.600 6 8.600 4.600 10 5.600C11.200 6.600 10 10.200 8.600 11.400C7.600 12.300 6.600 11.800 6.900 10.400C7.300 8.800 9.500 7.800 12.800 7.800" stroke="#999" stroke-width="1.300" fill="none" stroke-linecap="round"/></svg></div><div class="tx">签名</div></div>
<div class="sb" style="left:143px;top:631px"><div class="ic"><svg width="14" height="14" viewBox="0 0 14 14"><path d="M1 4V1h3M10 1h3v3M13 10v3h-3M4 13H1v-3" stroke="#999" stroke-width="1.1" fill="none"/><path d="M4.300 10.500L7 3.500l2.700 7M5.200 8.300h3.600" stroke="#999" stroke-width="1.1" fill="none"/></svg></div><div class="tx">文本识别</div></div>
<div class="sb" style="left:4px;top:679px"><div class="ic"><svg width="14" height="14" viewBox="0 0 14 14"><path d="M1.200 2.500v9M3.400 2.500v9M5.200 2.500v9M7.400 2.500v9M9.200 2.500v9M11 2.500v9M12.800 2.500v9" stroke="#999" stroke-width="1.100"/></svg></div><div class="tx">条码</div></div>
<div class="sb" style="left:143px;top:679px"><div class="ic"><svg width="14" height="14" viewBox="0 0 14 14"><rect x="1" y="1" width="12" height="12" rx="1.5" fill="#999"/><text x="7" y="10.600" font-size="9" text-anchor="middle" fill="#fff">伍</text></svg></div><div class="tx">大写金额</div></div>
<div class="sb" style="left:4px;top:727px"><div class="ic"><svg width="14" height="14" viewBox="0 0 14 14"><path d="M4.700 3.200L1.200 7l3.500 3.800M9.300 3.200L12.800 7l-3.500 3.800" stroke="#999" stroke-width="1.300" fill="none"/></svg></div><div class="tx">嵌入</div></div>
<div class="sh" style="top:798px">关联</div>
</div>
<div id="rp"></div>
<div id="rpc" class="abs" style="left:0;top:0;width:0;height:0">
<div class="abs" style="left:1513px;top:71px;transform:scale(1.12);transform-origin:0 0"><svg width="14" height="14" viewBox="0 0 14 14"><path d="M10.200 5.400V1.800Q10.200 1 9.400 1H1.600Q.800 1 .800 1.800V9.400Q.800 10.200 1.600 10.200H5.900" stroke="#888" stroke-width="1.400" fill="none"/><path d="M2.900 3.600H8.500M2.900 7.100H5.300" stroke="#888" stroke-width="1.300"/><circle cx="9.600" cy="9.400" r="2" fill="none" stroke="#888" stroke-width="1.300"/><path d="M11.100 10.900L12.800 12.600" stroke="#888" stroke-width="1.300"/></svg></div>
<div class="abs" style="left:1537px;top:68px;font-size:15px;line-height:20px;-webkit-text-stroke-width:.3px;color:#222">查询记录</div>
<div class="abs" style="left:1749px;top:64px;width:28px;height:28px;background:#f2f2f2;border-radius:3px"><svg class="abs" style="left:5px;top:5px" width="18" height="18" viewBox="0 0 24 24"><path fill="#2079e6" d="M19.140 12.940c.04-.3.06-.61.06-.94 0-.32-.02-.64-.07-.94l2.030-1.580a.49.49 0 0 0 .12-.61l-1.920-3.320a.488.488 0 0 0-.59-.22l-2.390.96c-.5-.38-1.030-.7-1.620-.94l-.36-2.540a.484.484 0 0 0-.48-.41h-3.840c-.24 0-.43.17-.47.410l-.36 2.540c-.59.24-1.130.57-1.620.94l-2.390-.96c-.22-.08-.47 0-.59.22L2.740 8.870c-.12.21-.8.47.12.61l2.030 1.580c-.5.300-.9.620-.9.940s.2.640.7.940l-2.030 1.580a.49.49 0 0 0-.12.610l1.920 3.320c.12.220.37.290.59.220l2.390-.96c.5.380 1.030.7 1.620.940l.36 2.540c.5.240.24.410.48.410h3.840c.24 0 .44-.17.47-.41l.36-2.540c.59-.24 1.130-.56 1.620-.94l2.390.96c.22.080.47 0 .59-.22l1.920-3.320c.12-.22.07-.47-.12-.61l-2.010-1.580zM12 15.600c-1.980 0-3.600-1.620-3.600-3.600s1.620-3.600 3.600-3.600 3.600 1.620 3.600 3.600-1.620 3.600-3.600 3.600z"/></svg></div>
<svg class="abs" style="left:1794px;top:73px" width="14" height="11" viewBox="0 0 14 11"><path d="M0 1.500h13.800M0 5h9M0 8.500h4.700" stroke="#888" stroke-width="1.200"/></svg>
<div class="abs" style="left:1474px;top:104px;width:344px;height:713px;border:3px solid #f00;border-radius:6px;z-index:5"></div>
<div class="rl" style="top:120px">显示字段</div>
<div class="rin" style="top:146px;height:36px"><div class="rt">显示 16 个</div><svg class="abs" style="left:240px;top:15px" width="10" height="6" viewBox="0 0 10 6"><path d="M.5.5L5 5 9.500.5" stroke="#888" stroke-width="1.100" fill="none"/></svg><div class="abs" style="left:263px;top:0;width:1px;height:34px;background:#d9d9d9"></div><svg class="abs" style="left:272px;top:9px" width="18" height="16" viewBox="0 0 18 16"><rect x="0" y="0" width="18" height="16" rx="1" fill="#888"/><rect x="1.500" y="1.500" width="15" height="13" fill="#fff"/><path d="M1.500 14.500L6.500 8l3.500 4 2.500-2.500 4 5z" fill="#888"/><circle cx="13" cy="5" r="1.500" fill="#888"/></svg></div>
<div class="rl" style="top:205px;-webkit-text-stroke-width:.4px;color:#333">排序</div>
<div class="rin" style="top:231px;height:36px"><div class="rt" style="top:9px">创建时间：最新的在前</div><svg class="abs" style="left:273px;top:10px" width="12" height="12" viewBox="0 0 12 12"><path d="M0 9.500V12h2.500l7.400-7.400-2.500-2.500zM11.800 2.700a.66.66 0 0 0 0-.94L10.240.2a.66.66 0 0 0-.94 0L8.100 1.400l2.500 2.500z" fill="#777"/></svg></div>
<div class="rl" style="top:290px;-webkit-text-stroke-width:.4px;color:#333">查询数量</div>
<div class="rin" style="top:315px;height:36px"><div class="rt" style="color:#666">全部</div></div>
<div class="abs" style="left:1505px;top:375px;width:300px;height:1px;background:#e8e8e8"></div>
<svg class="abs" style="left:1507px;top:404px" width="9" height="6" viewBox="0 0 9 6"><path d="M0 0h9L4.500 6z" fill="#666"/></svg><div class="abs" style="left:1525px;top:397px;font-size:14px;line-height:20px;-webkit-text-stroke-width:.4px;color:#222">操作设置</div>
<div class="abs" style="left:1505px;top:441px;width:14px;height:14px;border-radius:2px;border:1px solid #bbb;background:#fff"></div><div class="abs" style="left:1529px;top:439px;font-size:13px;line-height:18px;color:#333;white-space:nowrap">允许新增记录</div>
<div class="abs" style="left:1505px;top:470px;width:14px;height:14px;border-radius:2px;background:#2272e0"><svg class="abs" style="left:2px;top:3px" width="10" height="8" viewBox="0 0 10 8"><path d="M1 4l2.600 2.600L9 1" stroke="#fff" stroke-width="1.600" fill="none"/></svg></div><div class="abs" style="left:1529px;top:468px;font-size:13px;line-height:18px;color:#333;white-space:nowrap">允许打开记录</div>
<div class="rin" style="top:495px;height:38px"><div class="abs" style="left:0;top:0;width:58px;height:36px;background:#f8f8f8;border-radius:3px 0 0 3px"></div><div class="rt" style="left:17px;top:10px;color:#888">视图</div><div class="rt" style="left:71px;top:10px">表格1</div><svg class="abs" style="left:282px;top:16px" width="10" height="6" viewBox="0 0 10 6"><path d="M.5.5L5 5 9.500.5" stroke="#888" stroke-width="1.100" fill="none"/></svg></div>
<div class="abs" style="left:1505px;top:557px;width:300px;height:1px;background:#e8e8e8"></div>
<svg class="abs" style="left:1507px;top:586px" width="9" height="6" viewBox="0 0 9 6"><path d="M0 0h9L4.500 6z" fill="#666"/></svg><div class="abs" style="left:1525px;top:579px;font-size:14px;line-height:20px;-webkit-text-stroke-width:.4px;color:#222">高级设置</div>
<div class="abs" style="left:1505px;top:623px;width:14px;height:14px;border-radius:2px;border:1px solid #bbb;background:#fff"></div><div class="abs" style="left:1529px;top:621px;font-size:13px;line-height:18px;color:#333;white-space:nowrap">按用户权限过滤</div><div class="abs" style="left:1632px;top:623px"><svg width="14" height="14" viewBox="0 0 14 14"><circle cx="7" cy="7" r="6.800" fill="#888"/><path d="M4.900 5.300c0-1.300.9-2.100 2.100-2.100s2.100.8 2.100 1.900c0 1.500-2 1.500-2 3.200" stroke="#fff" stroke-width="1.500" fill="none"/><circle cx="7.100" cy="10.600" r=".9" fill="#fff"/></svg></div>
<div class="abs" style="left:1505px;top:664px;width:300px;height:1px;background:#e8e8e8"></div>
<svg class="abs" style="left:1507px;top:693px" width="9" height="6" viewBox="0 0 9 6"><path d="M0 0h9L4.500 6z" fill="#666"/></svg><div class="abs" style="left:1525px;top:686px;font-size:14px;line-height:20px;-webkit-text-stroke-width:.4px;color:#222">字段属性</div>
<div class="abs" style="left:1505px;top:730px;width:14px;height:14px;border-radius:2px;border:1px solid #bbb;background:#fff"></div><div class="abs" style="left:1529px;top:728px;font-size:13px;line-height:18px;color:#333;white-space:nowrap">隐藏</div><div class="abs" style="left:1564px;top:730px"><svg width="14" height="14" viewBox="0 0 14 14"><circle cx="7" cy="7" r="6.800" fill="#888"/><path d="M4.900 5.300c0-1.300.9-2.100 2.100-2.100s2.100.8 2.100 1.900c0 1.500-2 1.500-2 3.200" stroke="#fff" stroke-width="1.500" fill="none"/><circle cx="7.100" cy="10.600" r=".9" fill="#fff"/></svg></div>
<div class="abs" style="left:1505px;top:759px;width:14px;height:14px;border-radius:2px;border:1px solid #bbb;background:#fff"></div><div class="abs" style="left:1529px;top:757px;font-size:13px;line-height:18px;color:#333;white-space:nowrap">新增记录时隐藏</div><div class="abs" style="left:1629px;top:759px"><svg width="14" height="14" viewBox="0 0 14 14"><circle cx="7" cy="7" r="6.800" fill="#888"/><path d="M4.900 5.300c0-1.300.9-2.100 2.100-2.100s2.100.8 2.100 1.900c0 1.500-2 1.500-2 3.200" stroke="#fff" stroke-width="1.500" fill="none"/><circle cx="7.100" cy="10.600" r=".9" fill="#fff"/></svg></div>
<div class="abs" style="left:1505px;top:800px;width:300px;height:1px;background:#e8e8e8"></div>
<div class="abs" style="left:1477px;top:325px;width:6px;height:525px;border-radius:3px 3px 0 0;background:#bbb;z-index:4"></div>
<div class="abs" style="left:1827px;top:367px;width:6px;height:483px;border-radius:3px 3px 0 0;background:#bbb"></div>
</div>
<div id="hdr">
<svg class="abs" style="left:8px;top:17px" width="16" height="16" viewBox="0 0 16 16"><path d="M15.500 8H1.200M8 1L1 8l7 7" stroke="#555" stroke-width="1.500" fill="none"/></svg>
<div class="abs" style="left:41px;top:16px;font-size:16px;line-height:20px;color:#222;white-space:nowrap"><span style="-webkit-text-stroke-width:.5px">正在编辑表单：</span><span style="color:#333">报价单</span></div>
<div class="abs tab" style="left:771.5px;color:#1f7df0">编辑字段</div>
<div class="abs" style="left:760px;top:47px;width:80px;height:3px;background:#1f7df0"></div>
<div class="abs tab" style="left:888px">表单设置</div>
<div class="abs tab" style="left:1004px">公开发布</div>
<div class="abs btn" style="left:1626px;background:#f2f2f2;color:#888;-webkit-text-stroke-width:.25px">关闭</div>
<div class="abs btn" style="left:1728px;background:#2272e0;color:#fff;-webkit-text-stroke-width:.4px">保存</div>
</div>
<div id="rstrip">
<div class="abs circ" style="left:15px;top:9px;border:1px solid #ddd;background:#fff"><div class="abs" style="left:10px;top:9px"><svg width="14" height="15" viewBox="0 0 14 15"><path d="M7 1.200c-2.400 0-4.200 1.900-4.200 4.400v3.900L1.300 11.300h11.400L11.200 9.500V5.600C11.200 3.100 9.400 1.200 7 1.200z" fill="#888"/><path d="M5.600 12.300a1.400 1.400 0 0 0 2.800 0z" fill="#888"/><rect x="6.300" y=".2" width="1.400" height="1.800" rx=".7" fill="#888"/></svg></div></div>
<div class="abs circ" style="left:15px;top:63px;background:#4361ee"><svg class="abs" style="left:0;top:0" width="35" height="35" viewBox="0 0 35 35"><path d="M19.6 8.3L10.9 20.3H16.6L16.4 28.2L23 15.6H17.6Z" fill="#fff" stroke="#fff" stroke-width=".6" stroke-linejoin="round"/><path d="M10.3 8.8Q10.3 12 13.5 12Q10.3 12 10.3 15.2Q10.3 12 7.1000000000000005 12Q10.3 12 10.3 8.8ZM23.8 7.7Q23.8 10 26.1 10Q23.8 10 23.8 12.3Q23.8 10 21.5 10Q23.8 10 23.8 7.7ZM26.6 20.1Q26.6 22.6 29.1 22.6Q26.6 22.6 26.6 25.1Q26.6 22.6 24.1 22.6Q26.6 22.6 26.6 20.1Z" fill="#fff"/></svg></div>
<div class="abs circ" style="left:15px;top:117px;background:#657f8c"><svg class="abs" style="left:0;top:0" width="35" height="35" viewBox="0 0 35 35"><path d="M18 8.600C13.500 8.600 12.300 12.500 12.300 15.500V19.500L9.700 22.600H26.300L23.700 19.500V15.500C23.700 12.500 22.500 8.600 18 8.600Z" fill="#fff"/><path d="M15.200 23.900H20.800C20.600 26 19.500 27.500 18 27.500C16.500 27.500 15.400 26 15.200 23.900Z" fill="#fff"/></svg></div>
<div class="abs" style="left:0;top:774px;width:51px;height:1px;background:#e8e8ed"></div>
<svg class="abs" style="left:26px;top:791px" width="14" height="16" viewBox="0 0 14 16"><rect x="0" y="0" width="14" height="16" rx="1.500" fill="#999"/><path d="M2.300 0v16" stroke="#fff" stroke-width=".9"/><circle cx="8.300" cy="6" r="2.200" fill="#fff"/><path d="M4.300 12.300c.5-2 2.100-3 4-3s3.500 1 4 3z" fill="#fff"/></svg>
<div class="abs" style="left:0;top:816px;width:51px;height:34px;background:#9aa0a6"><svg class="abs" style="left:22px;top:14px" width="20" height="18" viewBox="0 0 20 18"><path d="M3 4.700H14M3 8.900H12.500M3 13.200H14M18 4.200L14.600 8.900 18 13.700" stroke="#fff" stroke-width="1.600" fill="none"/></svg></div>
</div>
</body></html>
